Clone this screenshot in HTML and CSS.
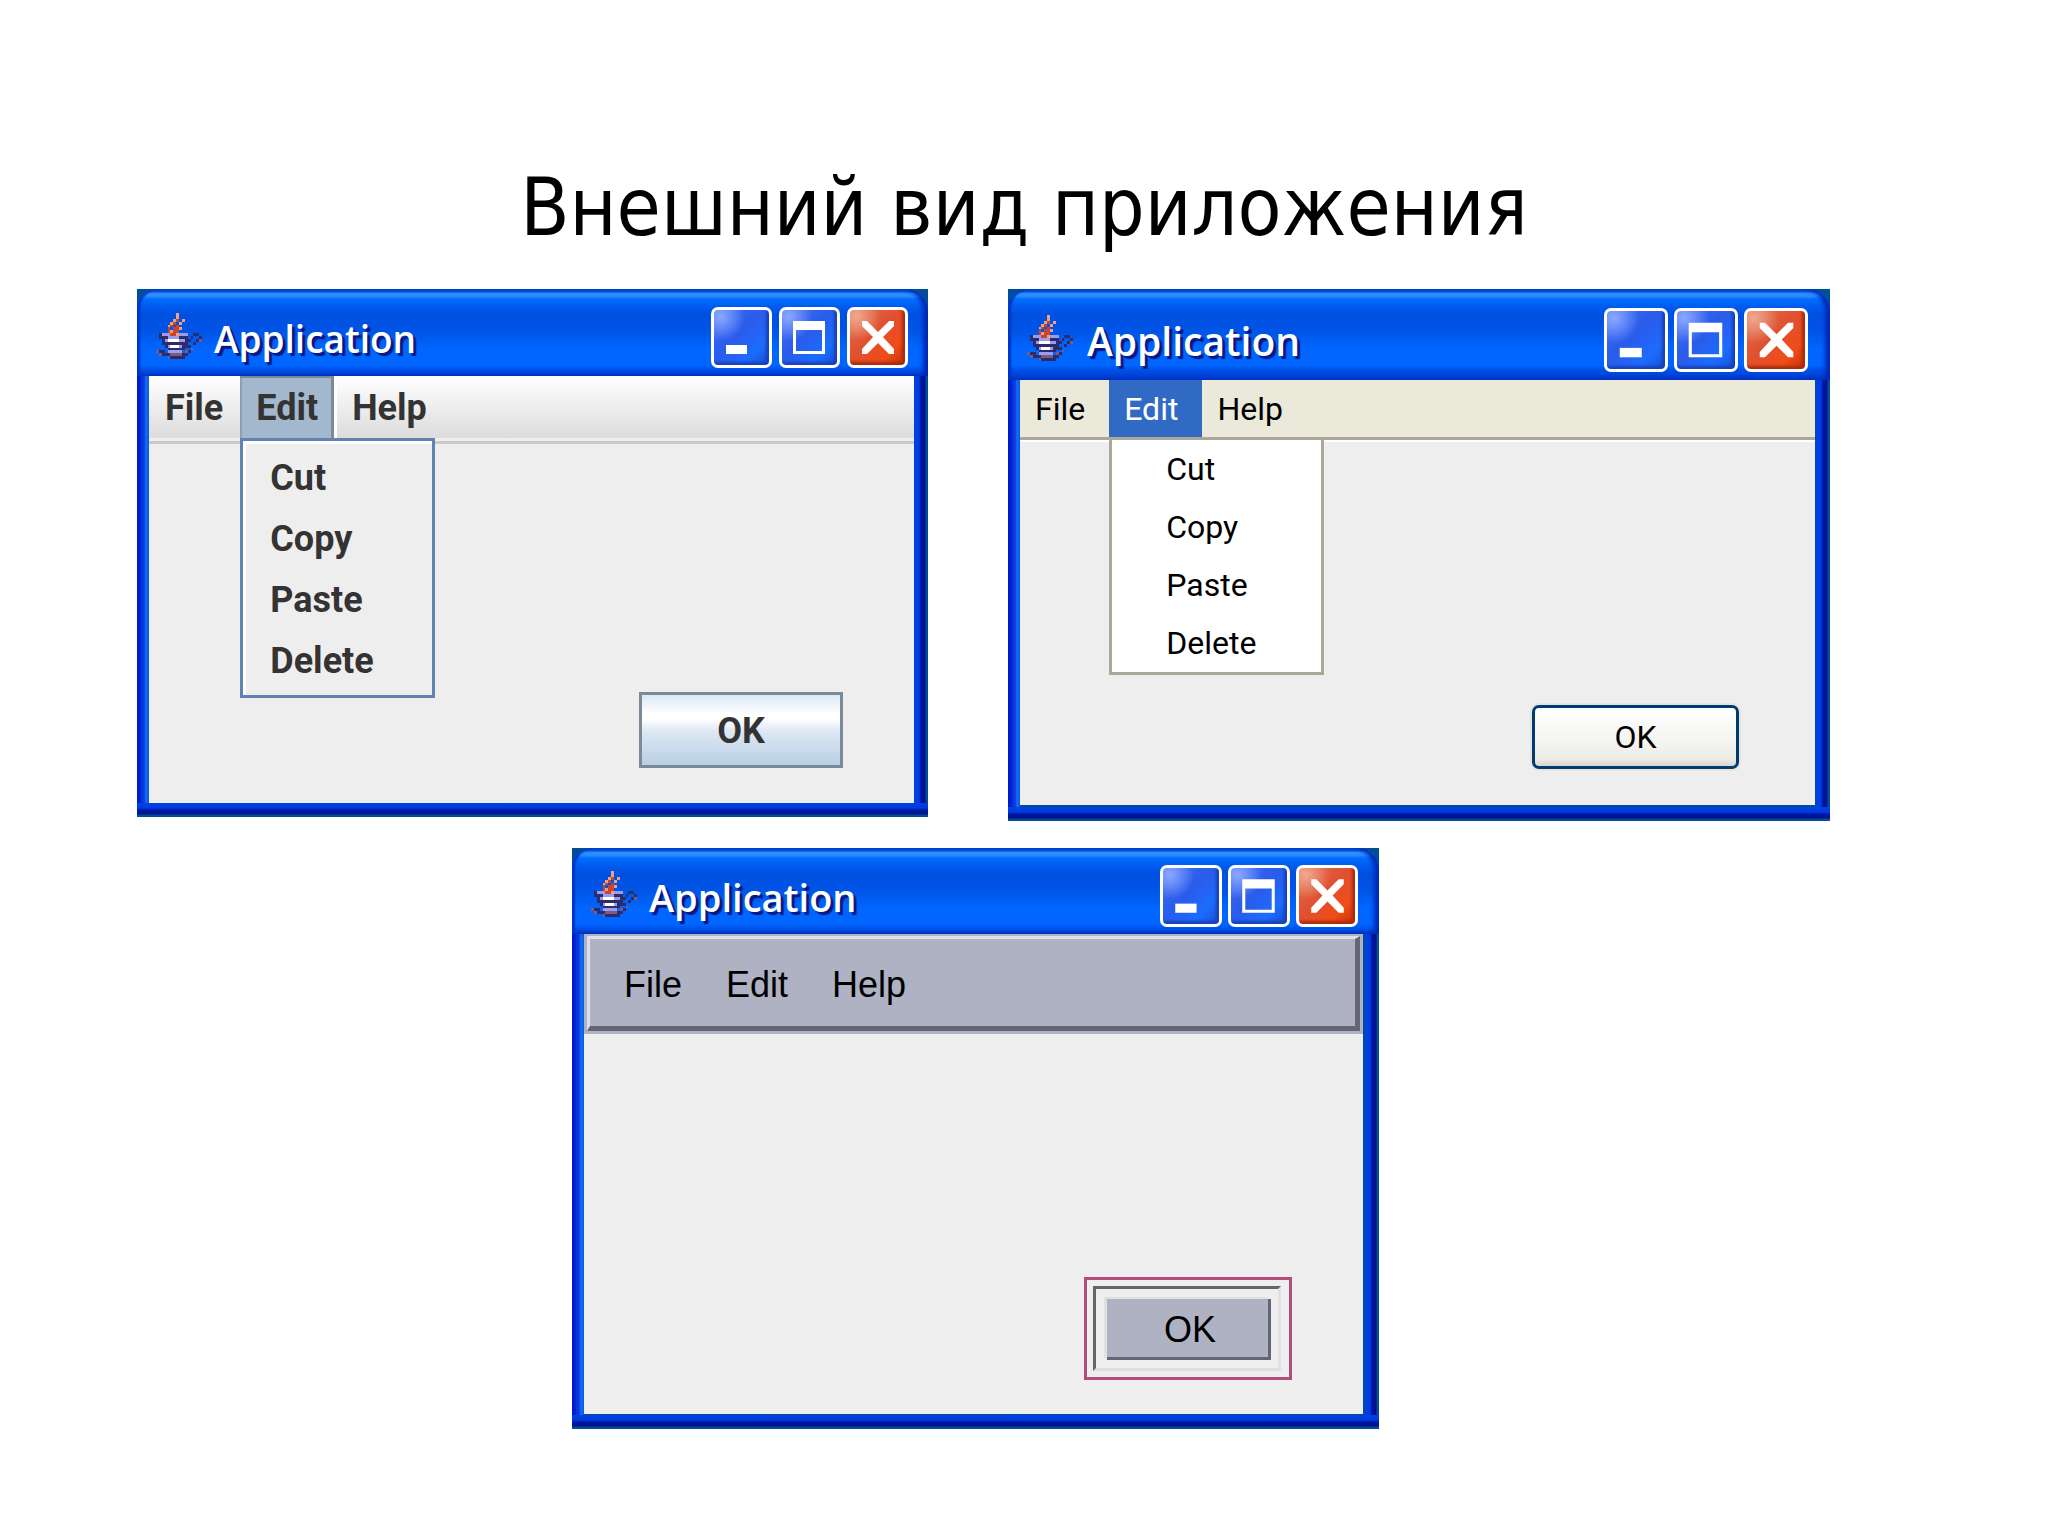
FILE: index.html
```html
<!DOCTYPE html>
<html lang="ru">
<head>
<meta charset="utf-8">
<title>Внешний вид приложения</title>
<link rel="stylesheet" href="styles.css">
</head>
<body>
<svg class="sprite" aria-hidden="true">
  <defs>
    <symbol id="java" viewBox="0 0 16 16">
      <g fill="none" shape-rendering="crispEdges">
        <path stroke="#f0a080" d="M7 .5h1M7 1.5h1M9 2.5h1M6 2.5h1M5 3.5h1M8 3.5h1M4 4.5h1M8 5.5h1M5 6.5h1M7 7.5h1"/>
        <path stroke="#c8452c" d="M7 2.5h1M6 3.5h1M5 4.5h1M7 4.5h1M4 5.5h1M6 5.5h2M4 6.5h1M6 6.5h2M5 7.5h2"/>
        <path stroke="#2c2c6c" d="M1 7.5h1M13 7.5h2M1 8.5h3M8 8.5h3M12 8.5h1M15 8.5h1M2 9.5h1M10 9.5h2M14 9.5h1M2 10.5h9M13 10.5h1M3 11.5h1M9 11.5h3M4 12.5h6M1 13.5h2M11 13.5h1M2 14.5h3M9 14.5h2M5 15.5h5"/>
        <path stroke="#9c9cec" d="M2 7.5h3M8 7.5h3M4 8.5h4M3 9.5h1M8 9.5h2M4 11.5h1M8 11.5h1M4 13.5h5"/>
        <path stroke="#fff" d="M4 9.5h4M5 11.5h3"/>
        <path stroke="#7c5c7c" d="M15 9.5h1M0 13.5h1M12 12.5h1M10 13.5h1M1 14.5h1M5 14.5h4M4 15.5h1"/>
      </g>
    </symbol>
    <symbol id="min" viewBox="0 0 61 61"><path fill="#fff" d="M15 38h21v9H15z"/></symbol>
    <symbol id="max" viewBox="0 0 61 61"><path fill="#fff" fill-rule="evenodd" d="M14 14h32v33H14zM17 23v21h26V23z"/></symbol>
    <symbol id="close" viewBox="0 0 61 61"><path fill="#fff" d="M15 14h5l11 11 11-11h5v5L36 30l11 12v5h-5L31 36 20 47h-5v-5l11-12-11-11z"/></symbol>
  </defs>
</svg>

<main class="slide">
  <h1 class="heading">Внешний вид приложения</h1>

  <div class="pair">
    <section class="window metal" aria-label="Application">
      <header class="titlebar">
        <svg class="logo" aria-hidden="true"><use href="#java"/></svg>
        <h2 class="caption">Application</h2>
        <div class="controls">
          <button class="ctl" type="button" aria-label="Minimize"><svg><use href="#min"/></svg></button>
          <button class="ctl" type="button" aria-label="Maximize"><svg><use href="#max"/></svg></button>
          <button class="ctl ctl-close" type="button" aria-label="Close"><svg><use href="#close"/></svg></button>
        </div>
      </header>
      <div class="frame">
        <nav class="menubar">
          <button class="menu" type="button">File</button>
          <div class="menu-wrap">
            <button class="menu open" type="button" aria-expanded="true">Edit</button>
            <div class="popup">
              <button class="item" type="button">Cut</button>
              <button class="item" type="button">Copy</button>
              <button class="item" type="button">Paste</button>
              <button class="item" type="button">Delete</button>
            </div>
          </div>
          <button class="menu" type="button">Help</button>
        </nav>
        <div class="client"><button class="ok" type="button">OK</button></div>
      </div>
    </section>

    <section class="window luna" aria-label="Application">
      <header class="titlebar">
        <svg class="logo" aria-hidden="true"><use href="#java"/></svg>
        <h2 class="caption">Application</h2>
        <div class="controls">
          <button class="ctl" type="button" aria-label="Minimize"><svg><use href="#min"/></svg></button>
          <button class="ctl" type="button" aria-label="Maximize"><svg><use href="#max"/></svg></button>
          <button class="ctl ctl-close" type="button" aria-label="Close"><svg><use href="#close"/></svg></button>
        </div>
      </header>
      <div class="frame">
        <nav class="menubar">
          <button class="menu" type="button">File</button>
          <div class="menu-wrap">
            <button class="menu open" type="button" aria-expanded="true">Edit</button>
            <div class="popup">
              <button class="item" type="button">Cut</button>
              <button class="item" type="button">Copy</button>
              <button class="item" type="button">Paste</button>
              <button class="item" type="button">Delete</button>
            </div>
          </div>
          <button class="menu" type="button">Help</button>
        </nav>
        <div class="client"><button class="ok" type="button">OK</button></div>
      </div>
    </section>
  </div>

  <div class="single">
    <section class="window motif" aria-label="Application">
      <header class="titlebar">
        <svg class="logo" aria-hidden="true"><use href="#java"/></svg>
        <h2 class="caption">Application</h2>
        <div class="controls">
          <button class="ctl" type="button" aria-label="Minimize"><svg><use href="#min"/></svg></button>
          <button class="ctl" type="button" aria-label="Maximize"><svg><use href="#max"/></svg></button>
          <button class="ctl ctl-close" type="button" aria-label="Close"><svg><use href="#close"/></svg></button>
        </div>
      </header>
      <div class="frame">
        <nav class="menubar">
          <div class="bevel">
            <button class="menu" type="button">File</button>
            <button class="menu" type="button">Edit</button>
            <button class="menu" type="button">Help</button>
          </div>
        </nav>
        <div class="client">
          <div class="focus-ring"><div class="well"><button class="ok" type="button">OK</button></div></div>
        </div>
      </div>
    </section>
  </div>
</main>
</body>
</html>
```
FILE: styles.css
```css
* { box-sizing: border-box; }

body {
  margin: 0;
  background: #fff;
  color: #000;
}

button {
  margin: 0;
  padding: 0;
  border: 0;
  background: none;
  color: inherit;
  font: inherit;
  text-align: left;
}

.sprite { position: absolute; width: 0; height: 0; }

.slide { padding: 152px 0 106px; }

.heading {
  margin: 0 0 25px;
  font: 400 80px/112px "DejaVu Sans Condensed", "DejaVu Sans", sans-serif;
  text-align: center;
}

.pair {
  display: grid;
  grid-template-columns: 791fr 822fr;
  align-items: start;
  gap: 80px;
  padding: 0 218px 0 137px;
}

.single { padding: 27px 669px 0 572px; }

/* Window frame */
.window {
  --ctl: 62px;
  background: #004e98;
}

.titlebar {
  display: flex;
  align-items: center;
  height: 87px;
  padding: 10px 20px 0 19px;
  border-radius: 20px 22px 0 0;
  background: linear-gradient(#0058d8 0, #0058d8 3px, #2f8cff 4px, #2f8cff 7px, #0070ff 10px, #005cf0 17px, #0050e0 26px, #0054e6 42px, #0066ff 60px, #0066ff 76px, #0050e8 81px, #0038c8 100%);
  box-shadow: inset 3px 0 2px #0034c8, inset -5px 0 4px #0028b8;
}

.logo {
  width: 46px;
  height: 46px;
  margin-bottom: 4px;
}

.caption {
  flex: 1;
  margin: 0 0 0 12px;
  padding-top: 2px;
  color: #fff;
  font: 600 37px/48px "Open Sans", sans-serif;
  text-shadow: 3px 3px 1px #0a1883;
}

.controls { display: flex; gap: 6px; }

.ctl {
  width: var(--ctl);
  height: var(--ctl);
  border: 3px solid #fff;
  border-radius: 7px;
  background: radial-gradient(circle at 12% 12%, #8ca8ff 0, transparent 35%), linear-gradient(135deg, #3f6cf4, #2a5cea 45%, #1c6cff 75%, #1450d0);
  box-shadow: inset -3px -3px 3px #1a40b8;
}

.ctl svg {
  display: block;
  width: var(--ctl);
  height: var(--ctl);
  margin: -3px;
}

.ctl-close {
  background: radial-gradient(circle at 12% 12%, #f0a890 0, transparent 35%), linear-gradient(135deg, #e07050, #e05030 45%, #f04c18 75%, #c83000);
  box-shadow: inset -3px -3px 3px #a82c10;
}

.frame {
  padding: 0 14px 14px 12px;
  background:
    linear-gradient(#0040e6 0, #003cdc 5px, #0018a8 7px, #00108c 11px, #004e98 12px) bottom / 100% 14px no-repeat,
    linear-gradient(90deg, #0018c8 0, #0020d0 3px, #0838e0 5px, #0838e0 7px, #1470f4 9px, #0858e0 12px) left / 12px 100% no-repeat,
    linear-gradient(90deg, #0040e6 0, #003cdc 5px, #0018a8 7px, #00108c 11px, #004e98 12px) right / 14px 100% no-repeat;
}

.menubar { display: flex; align-items: flex-start; }

.menu { display: block; }

.menu-wrap { position: relative; }

.popup {
  position: absolute;
  top: 100%;
  left: 0;
}

.item { display: block; width: 100%; }

.client {
  display: flex;
  align-items: flex-end;
  justify-content: flex-end;
  background: #efeeef;
}

.ok { text-align: center; }

/* Metal look */
.metal { --ctl: 61px; font: 700 36px/61px Roboto, sans-serif; color: #333; }

.metal .controls { gap: 7px; }

.metal .menubar {
  height: 68px;
  border-bottom: 3px solid #cacaca;
  background: linear-gradient(#fff, #dddcdd 62px, #eee 62px);
}

.metal .menu {
  height: 62px;
  padding: 2px 17px 0 16px;
}

.metal .menu:last-child { padding-left: 18px; }

.metal .open {
  padding: 0 13px 0 16px;
  border: solid #7a8a99;
  border-width: 2px 3px 0 0;
  background: #a3b8cc;
  box-shadow: inset 2px 0 #8c9eb0, 3px 0 #fff;
}

.metal .popup {
  width: 195px;
  padding: 7px 0 3px;
  border: 3px solid #6382b4;
  background: #eee;
  box-shadow: inset 3px 3px #fff;
}

.metal .item { padding-left: 27px; }

.metal .client { padding: 248px 71px 35px 0; }

.metal .ok {
  width: 204px;
  height: 76px;
  padding-top: 2px;
  border: 3px solid #7a8a99;
  background: linear-gradient(#dde8f3, #fff 28%, #fff 34%, #dde8f3 52%, #b8cfe5);
}

/* Windows look */
.luna { --ctl: 64px; font: 400 32px/58px Roboto, sans-serif; }

.luna .titlebar { height: 91px; padding-right: 22px; }

.luna .caption { margin-left: 14px; font-size: 39px; }

.luna .frame { padding: 0 15px 16px 12px; }

.luna .menubar {
  height: 62px;
  border-bottom: 2px solid #fff;
  background: linear-gradient(#ebe9d9 57px, #aca899 57px);
}

.luna .menu {
  height: 57px;
  padding: 0 24px 0 15px;
}

.luna .open { background: #316ac5; color: #fff; }

.luna .popup {
  width: 215px;
  border: 3px solid #aca899;
  background: #fff;
}

.luna .item { padding-left: 54px; }

.luna .client { padding: 263px 76px 36px 0; }

.luna .ok {
  width: 207px;
  height: 64px;
  border: 3px solid #003c74;
  border-radius: 7px;
  background: linear-gradient(#fff, #f4f4f0 60%, #ecebe6 88%, #dcd4cc);
  box-shadow: 0 0 0 2px #e8e4dc;
}

/* Motif look */
.motif { font: 400 36px/40px "Liberation Sans", Arial, sans-serif; }

.motif .titlebar { height: 86px; padding-right: 21px; }

.motif .caption { font-size: 38px; }

.motif .frame { padding: 0 16px 15px 12px; }

.motif .menubar {
  display: block;
  padding: 2px 3px 3px;
  background: #aeb2c3;
}

.motif .bevel {
  display: flex;
  gap: 44px;
  padding: 26px 34px 21px;
  border: solid;
  border-width: 3px 5px 5px 3px;
  border-color: #dcdeea #656574 #656574 #dcdeea;
}

.motif .client { padding: 243px 71px 34px 0; }

.focus-ring {
  width: 208px;
  padding: 6px 8px 6px 6px;
  border: 3px solid #b24d7a;
}

.well {
  padding: 10px 7px 8px 11px;
  border: solid;
  border-width: 3px;
  border-color: #656565 #e0e0e0 #e0e0e0 #656565;
}

.motif .ok {
  display: block;
  width: 100%;
  height: 61px;
  padding: 4px 0 0 5px;
  border: solid #656574;
  border-width: 0 3px 3px 0;
  background: #aeb2c3;
  box-shadow: -3px -2px #e0e0e0;
}
```
